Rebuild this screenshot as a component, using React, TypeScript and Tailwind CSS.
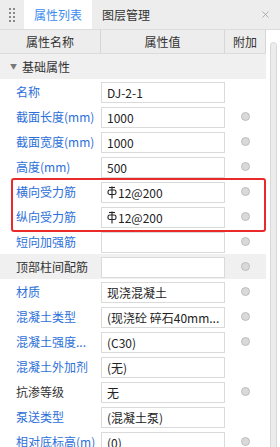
import { X } from "lucide-react";

type Row = {
  label: string;
  value?: string;
  rebar?: boolean;
  blue?: boolean;
  dot?: boolean;
  gray?: boolean;
};

const rows: Row[] = [
  { label: "名称", value: "DJ-2-1", blue: true },
  { label: "截面长度(mm)", value: "1000", blue: true, dot: true },
  { label: "截面宽度(mm)", value: "1000", blue: true, dot: true },
  { label: "高度(mm)", value: "500", blue: true, dot: true },
  { label: "横向受力筋", value: "12@200", rebar: true, blue: true, dot: true },
  { label: "纵向受力筋", value: "12@200", rebar: true, blue: true, dot: true },
  { label: "短向加强筋", value: "", blue: true, dot: true },
  { label: "顶部柱间配筋", value: "", dot: true, gray: true },
  { label: "材质", value: "现浇混凝土", blue: true, dot: true },
  { label: "混凝土类型", value: "(现浇砼 碎石40mm...", blue: true, dot: true },
  { label: "混凝土强度...", value: "(C30)", blue: true, dot: true },
  { label: "混凝土外加剂", value: "(无)", blue: true },
  { label: "抗渗等级", value: "无", dot: true },
  { label: "泵送类型", value: "(混凝土泵)", blue: true },
  { label: "相对底标高(m)", value: "(0)", blue: true, dot: true },
];

function RebarMark() {
  return (
    <svg width="10" height="13" viewBox="0 0 10 13" className="mr-[1px] shrink-0" fill="none" stroke="#222" strokeWidth="1.1">
      <path d="M5 0.5V12.5" />
      <path d="M2 1.5H8" />
      <rect x="1" y="4" width="8" height="4.5" rx="1.8" />
    </svg>
  );
}

function GripIcon() {
  return (
    <div className="grid grid-cols-2 gap-x-[2px] gap-y-[2px]">
      {Array.from({ length: 8 }).map((_, i) => (
        <span key={i} className="h-[2px] w-[2px] bg-[#8a8a8a]" />
      ))}
    </div>
  );
}

export default function App() {
  return (
    <div
      className="relative h-[447px] w-[280px] overflow-hidden bg-white text-[12px] text-[#333]"
      style={{ fontFamily: '"Noto Sans CJK SC", "Noto Sans", sans-serif' }}
    >
      {/* tab bar */}
      <div className="flex h-[30px] items-stretch border-b border-[#dcdcdc] bg-[#ededed]">
        <div className="flex w-[24px] items-center justify-center">
          <GripIcon />
        </div>
        <div className="flex w-[68px] items-center justify-center bg-white text-[#3b8cef]">属性列表</div>
        <div className="flex items-center pl-[10px] text-[#333]">图层管理</div>
        <div className="ml-auto flex items-center pr-[9px] text-[#9a9a9a]">
          <X className="h-[11px] w-[11px]" strokeWidth={1.6} />
        </div>
      </div>

      <div className="flex">
        <div className="w-[266px]">
          {/* header */}
          <div className="flex h-[24px] border-b border-[#dcdcdc] bg-[#ededed] leading-[23px]">
            <div className="w-[101px] border-r border-[#d6d6d6] text-center">属性名称</div>
            <div className="w-[124px] border-r border-[#d6d6d6] text-center">属性值</div>
            <div className="w-[41px] border-r border-[#d6d6d6] text-center">附加</div>
          </div>

          {/* section */}
          <div className="flex h-[25px] items-center bg-[#f0f0f0] pl-[10px]">
            <span className="mr-[5px] text-[7px] text-[#777]">▼</span>
            <span>基础属性</span>
          </div>

          {rows.map((row) => (
            <div key={row.label} className={`flex h-[25px] ${row.gray ? "bg-[#f0f0f0]" : "bg-white"}`}>
              <div className={`w-[101px] pl-[16px] pt-[2px] leading-[21px] whitespace-nowrap ${row.blue ? "text-[#2c6fd9]" : "text-[#333]"}`}>
                {row.label}
              </div>
              <div className="w-[124px] pt-[3px]">
                <div className="flex h-[21px] items-center border border-[#dadada] bg-white pl-[5px] whitespace-nowrap text-[#222]">
                  {row.rebar && <RebarMark />}
                  {row.value}
                </div>
              </div>
              <div className="flex w-[41px] items-center justify-center">
                {row.dot && <span className="h-[9px] w-[9px] rounded-full border border-[#bdbdbd] bg-[#d9d9d9]" />}
              </div>
            </div>
          ))}
        </div>

        {/* scrollbar */}
        <div className="flex w-[14px] justify-center pt-[12px]">
          <div className="h-[420px] w-[7px] rounded-full border border-[#d8d8d8] bg-[#ececec]" />
        </div>
      </div>

      {/* annotation */}
      <div className="pointer-events-none absolute left-[11px] top-[178px] h-[54px] w-[255px] rounded-[3px] border-2 border-[#ea2a2a]" />
    </div>
  );
}
